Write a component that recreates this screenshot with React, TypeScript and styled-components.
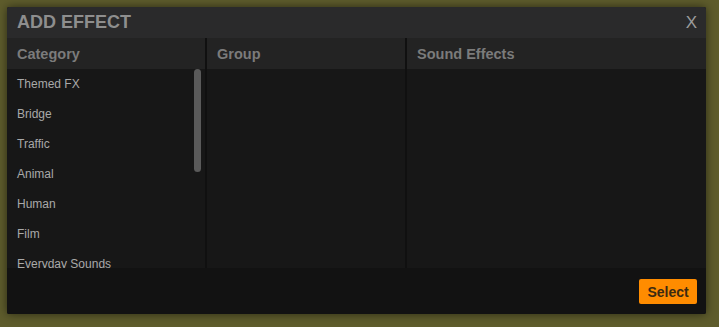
import React from 'react';
import styled, { createGlobalStyle } from 'styled-components';

const GlobalStyle = createGlobalStyle`
  html, body {
    margin: 0;
    padding: 0;
    background: #5e5c2c;
    font-family: "Liberation Sans", Arial, sans-serif;
  }
  #root {
    width: 719px;
    height: 327px;
    overflow: hidden;
  }
`;

const Page = styled.div`
  width: 719px;
  height: 327px;
  padding: 7px;
  box-sizing: border-box;
`;

const Modal = styled.div`
  width: 699px;
  height: 307px;
  display: flex;
  flex-direction: column;
  background: #121212;
  border-radius: 2px;
  box-shadow: 0 0 10px rgba(0, 0, 0, 0.55);
  overflow: hidden;
`;

const TitleBar = styled.div`
  height: 31px;
  flex: none;
  display: flex;
  align-items: center;
  justify-content: space-between;
  padding: 0 9px 0 10px;
  background: #2a2a2b;
`;

const Title = styled.h1`
  margin: 0;
  font-size: 18px;
  font-weight: bold;
  color: #8e8e8e;
`;

const Close = styled.button`
  border: none;
  background: none;
  padding: 0;
  font-family: "Liberation Sans", Arial, sans-serif;
  font-size: 17px;
  color: #9c9c9c;
  cursor: pointer;
  line-height: 1;
`;

const Columns = styled.div`
  display: grid;
  grid-template-columns: 198px 198px 1fr;
  gap: 2px;
  background: #101010;
  height: 230px;
  flex: none;
`;

const Column = styled.section`
  display: flex;
  flex-direction: column;
  min-height: 0;
  background: #171717;
`;

const ColumnHeader = styled.div`
  height: 31px;
  flex: none;
  display: flex;
  align-items: center;
  padding-left: 10px;
  background: #232323;
  font-size: 14.5px;
  font-weight: bold;
  color: #7b7b7b;
`;

const ListWrap = styled.div`
  position: relative;
  flex: 1;
  min-height: 0;
`;

const List = styled.ul`
  margin: 0;
  padding: 0;
  list-style: none;
  height: 100%;
  overflow: hidden;
`;

const Thumb = styled.div`
  position: absolute;
  top: 0;
  right: 4px;
  width: 7px;
  height: 103px;
  border-radius: 4px;
  background: #5a5a5a;
`;

const Item = styled.li`
  height: 30px;
  display: flex;
  align-items: center;
  padding-left: 10px;
  font-size: 12px;
  color: #a9a9a9;
  cursor: pointer;
`;

const Footer = styled.div`
  flex: 1;
  display: flex;
  justify-content: flex-end;
  align-items: flex-start;
  padding: 11px 9px 0 0;
  background: #121212;
`;

const SelectButton = styled.button`
  height: 25px;
  width: 58px;
  border: none;
  border-radius: 2px;
  background: #ff8c00;
  color: #3b2a12;
  font-family: "Liberation Sans", Arial, sans-serif;
  font-size: 14px;
  font-weight: bold;
  padding: 0;
  cursor: pointer;
`;

const categories = [
  'Themed FX',
  'Bridge',
  'Traffic',
  'Animal',
  'Human',
  'Film',
  'Everyday Sounds',
];

export default function App() {
  return (
    <>
      <GlobalStyle />
      <Page>
        <Modal>
          <TitleBar>
            <Title>ADD EFFECT</Title>
            <Close>X</Close>
          </TitleBar>
          <Columns>
            <Column>
              <ColumnHeader>Category</ColumnHeader>
              <ListWrap>
                <List>
                  {categories.map((c) => (
                    <Item key={c}>{c}</Item>
                  ))}
                </List>
                <Thumb />
              </ListWrap>
            </Column>
            <Column>
              <ColumnHeader>Group</ColumnHeader>
              <ListWrap>
                <List />
              </ListWrap>
            </Column>
            <Column>
              <ColumnHeader>Sound Effects</ColumnHeader>
              <ListWrap>
                <List />
              </ListWrap>
            </Column>
          </Columns>
          <Footer>
            <SelectButton>Select</SelectButton>
          </Footer>
        </Modal>
      </Page>
    </>
  );
}
